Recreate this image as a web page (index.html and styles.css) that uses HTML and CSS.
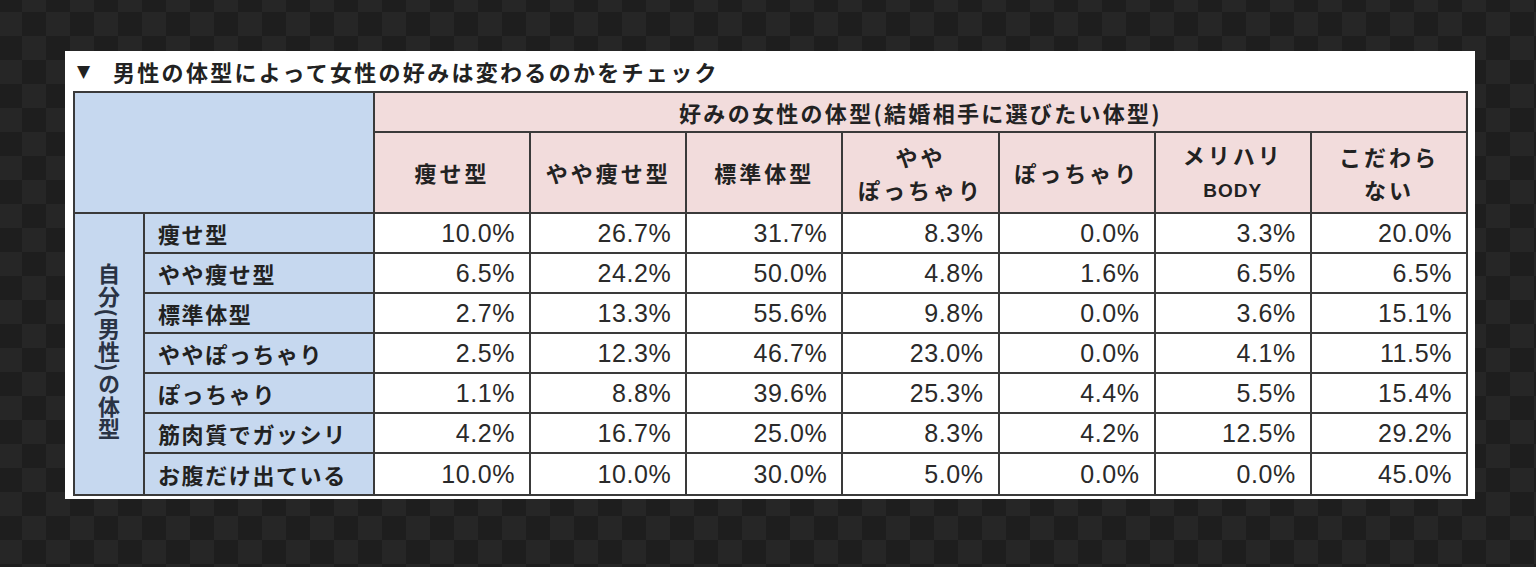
FILE: index.html
```html
<!DOCTYPE html>
<html lang="ja">
<head>
<meta charset="utf-8">
<title>男性の体型によって女性の好みは変わるのかをチェック</title>
<link rel="stylesheet" href="styles.css">
</head>
<body>
<div class="card">
  <div class="title"><span class="tri">▼</span><span class="title-text">男性の体型によって女性の好みは変わるのかをチェック</span></div>
  <table class="grid">
    <colgroup>
      <col class="c-side"><col class="c-label">
      <col class="c-data"><col class="c-data"><col class="c-data"><col class="c-data"><col class="c-data"><col class="c-data"><col class="c-data">
    </colgroup>
    <thead>
      <tr class="h1">
        <th class="corner" colspan="2" rowspan="2"></th>
        <th class="pink" colspan="7">好みの女性の体型(結婚相手に選びたい体型)</th>
      </tr>
      <tr class="h2">
        <th class="pink">痩せ型</th>
        <th class="pink">やや痩せ型</th>
        <th class="pink">標準体型</th>
        <th class="pink">やや<br>ぽっちゃり</th>
        <th class="pink">ぽっちゃり</th>
        <th class="pink">メリハリ<br><span class="latin">BODY</span></th>
        <th class="pink">こだわら<br>ない</th>
      </tr>
    </thead>
    <tbody>
      <tr>
        <th class="side" rowspan="7"><span class="vert">自分(男性)の体型</span></th>
        <th class="label">痩せ型</th>
        <td>10.0%</td><td>26.7%</td><td>31.7%</td><td>8.3%</td><td>0.0%</td><td>3.3%</td><td>20.0%</td>
      </tr>
      <tr>
        <th class="label">やや痩せ型</th>
        <td>6.5%</td><td>24.2%</td><td>50.0%</td><td>4.8%</td><td>1.6%</td><td>6.5%</td><td>6.5%</td>
      </tr>
      <tr>
        <th class="label">標準体型</th>
        <td>2.7%</td><td>13.3%</td><td>55.6%</td><td>9.8%</td><td>0.0%</td><td>3.6%</td><td>15.1%</td>
      </tr>
      <tr>
        <th class="label">ややぽっちゃり</th>
        <td>2.5%</td><td>12.3%</td><td>46.7%</td><td>23.0%</td><td>0.0%</td><td>4.1%</td><td>11.5%</td>
      </tr>
      <tr>
        <th class="label">ぽっちゃり</th>
        <td>1.1%</td><td>8.8%</td><td>39.6%</td><td>25.3%</td><td>4.4%</td><td>5.5%</td><td>15.4%</td>
      </tr>
      <tr>
        <th class="label">筋肉質でガッシリ</th>
        <td>4.2%</td><td>16.7%</td><td>25.0%</td><td>8.3%</td><td>4.2%</td><td>12.5%</td><td>29.2%</td>
      </tr>
      <tr class="last">
        <th class="label">お腹だけ出ている</th>
        <td>10.0%</td><td>10.0%</td><td>30.0%</td><td>5.0%</td><td>0.0%</td><td>0.0%</td><td>45.0%</td>
      </tr>
    </tbody>
  </table>
</div>
</body>
</html>
```

FILE: styles.css
```css
html, body {
  margin: 0;
  height: 100%;
}
body {
  padding: 51px 0 0 65px;
  box-sizing: border-box;
  background-color: #222;
  background-image: conic-gradient(#262626 25%, #1e1e1e 0 50%, #262626 0 75%, #1e1e1e 0);
  background-size: 48px 48px;
  background-position: 22px 12px;
  font-family: "Noto Sans CJK JP", "Liberation Sans", sans-serif;
  color: #222;
}
.card {
  width: 1410px;
  box-sizing: border-box;
  background: #fff;
  padding: 0 7px 3px 8px;
}
.title {
  height: 40px;
  display: flex;
  align-items: center;
  font-weight: 700;
  font-size: 22px;
  letter-spacing: 2.3px;
  color: #222;
}
.tri {
  font-family: "DejaVu Sans", sans-serif;
  font-size: 17px;
  letter-spacing: 0;
  margin-left: 4px;
  width: 36px;
}
.grid {
  width: 1395px;
  table-layout: fixed;
  border-collapse: collapse;
  border: 2px solid #333;
}
.c-side { width: 70px; }
.c-label { width: 230px; }
.grid th, .grid td {
  border: 2px solid #3a3a3a;
  padding: 0;
}
.h1 th { height: 38px; }
.h2 th { height: 79px; }
tbody tr { height: 40px; }
tbody tr.last { height: 42px; }
.corner, .side, .label {
  background: #c6d8ef;
}
.pink {
  background: #f2dcdc;
  font-weight: 700;
  font-size: 22px;
  letter-spacing: 3px;
  line-height: 33px;
  text-align: center;
  color: #222;
}
.h1 .pink { letter-spacing: 2.3px; }
.latin {
  font-family: "Liberation Sans", sans-serif;
  font-size: 19px;
  letter-spacing: 1px;
}
.label {
  text-align: left;
  padding-left: 13px !important;
  font-weight: 700;
  font-size: 22px;
  letter-spacing: 1.6px;
  color: #222;
}
.side {
  text-align: center;
  vertical-align: middle;
}
.vert {
  display: inline-block;
  writing-mode: vertical-rl;
  font-weight: 700;
  font-size: 22px;
  letter-spacing: 0.8px;
  color: #2a3344;
}
.grid td {
  background: #fff;
  text-align: right;
  padding-right: 14px;
  font-family: "Liberation Sans", sans-serif;
  font-size: 25px;
  letter-spacing: 0.6px;
  color: #2a2a2a;
}
```
